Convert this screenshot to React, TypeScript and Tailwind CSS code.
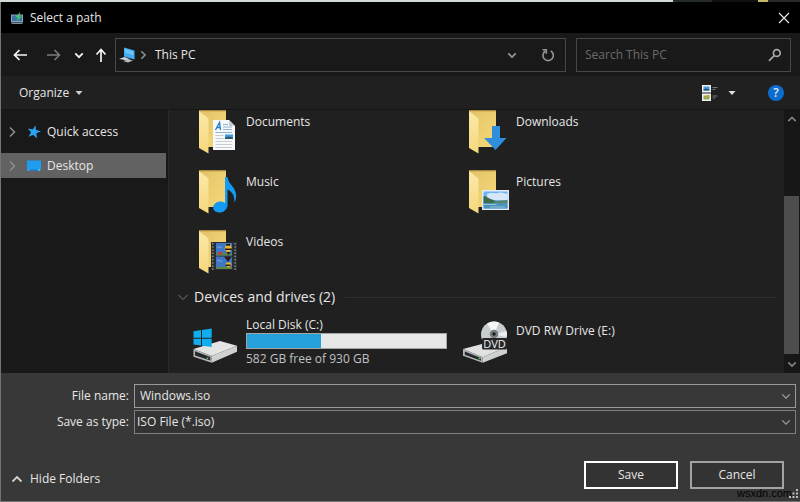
import React, { useState } from 'react';

type FolderKind = 'documents' | 'downloads' | 'music' | 'pictures' | 'videos';

const FOLDERS: { kind: FolderKind; name: string }[] = [
  { kind: 'documents', name: 'Documents' },
  { kind: 'downloads', name: 'Downloads' },
  { kind: 'music', name: 'Music' },
  { kind: 'pictures', name: 'Pictures' },
  { kind: 'videos', name: 'Videos' },
];

const DISK = { name: 'Local Disk (C:)', free: 582, total: 930 };

interface ChevronProps {
  direction: 'up' | 'down' | 'right';
  className?: string;
  strokeWidth?: number;
}

const CHEVRON_PATHS = {
  up: 'M1.5 8.5 6 4l4.5 4.5',
  down: 'M1.5 4 6 8.5 10.5 4',
  right: 'M4 1.5 8.5 6 4 10.5',
};

function Chevron({ direction, className = '', strokeWidth = 1.5 }: ChevronProps) {
  return (
    <svg viewBox="0 0 12 12" fill="none" stroke="currentColor" strokeWidth={strokeWidth} className={`shrink-0 ${className}`}>
      <path d={CHEVRON_PATHS[direction]} />
    </svg>
  );
}

function FolderOverlay({ kind }: { kind: FolderKind }) {
  switch (kind) {
    case 'documents':
      return (
        <g>
          <path d="M21 10h16l6 6v24H21z" fill="#f6f8fa" />
          <path d="M37 10v6h6z" fill="#c3ccd4" />
          <path d="M23.5 20 27.5 12.5 28.5 20M25 17.5h3.5" fill="none" stroke="#2b7fc4" strokeWidth="1.4" />
          <path d="M31 14.5h5M31 17h9M31 19.5h9M23.5 22.5h16.5" stroke="#8fb4d6" strokeWidth="1" />
          <path d="M23.5 25.5h8M23.5 28.5h8M23.5 31.5h16.5M23.5 34.5h16.5M23.5 37.5h16.5" stroke="#c4cbd2" strokeWidth="1" />
          <path d="M33 24.5h8V29h-8z" fill="#3d9be0" />
          <path d="M33 29v-1.5l4-1 4 1.2V29z" fill="#31566b" />
        </g>
      );
    case 'downloads':
      return <path d="M30 16h8v12h6.5L33.5 40 22 28h8z" fill="#2f8fdc" />;
    case 'music':
      return (
        <g fill="#129bf0">
          <ellipse cx="28" cy="37" rx="7" ry="5.5" transform="rotate(-12 28 37)" />
          <path d="M33 7h2.5c.5 7 8.500 10 8.700 18.500 0 3-.7 5-1.700 7 .3-8-3-11-7-13V37H33z" />
        </g>
      );
    case 'pictures':
      return (
        <g>
          <path d="M20 20h27v20H20z" fill="#e3edf5" />
          <path d="M21.5 21.500h24v17h-24z" fill="#6fb3ee" />
          <path d="M25 24c4-2 8 0 11-1s5 0 9.500 1v6h-20z" fill="#d5e8f7" />
          <path d="M21.5 26c3 0 4 2 7 3s6 2 10 4h-17z" fill="#3c6b4c" />
          <path d="M31 32c5-2 9-1 14.500-2v3H31z" fill="#5b8468" />
          <path d="M21.5 33h24v5.500h-24z" fill="#4b93b8" />
          <path d="M21.5 34.500h13M28 37h15" stroke="#a5d0df" strokeWidth=".8" />
        </g>
      );
    case 'videos':
      return (
        <g>
          <path d="M19 12h26v28H19z" fill="#2b2d31" />
          <path d="M20.8 13v27M43.200 13v27" stroke="#84878a" strokeWidth="1.500" strokeDasharray="1.500 1.700" />
          <path d="M24 13h16v12.500H24zM24 26.500h16V39H24z" fill="#3d77c6" />
          <path d="M24 23.500c4-1.500 8 0 16 0v2H24zM24 37.500c5-1.500 9 0 16-1V39H24z" fill="#5d8744" />
          <path d="M34 14h4l2 4.500-3.500 5-4-4z" fill="#e9b731" />
          <path d="M34 14h4v1.800h-4zM33 18.500h7V20h-7zM34.500 22h4l-2 3z" fill="#2a1d1a" />
          <path d="M32 26.500h8L36 32z" fill="#2a1d1a" />
          <path d="M34.500 32.500h4l1 2.500-3 3-3-3z" fill="#e9b731" />
          <path d="M33.500 34.500h5V36h-5z" fill="#2a1d1a" />
          <path d="M26 22h4.500v2.500H26z" fill="#b9433c" />
          <path d="M25 17.500c2-1.500 3 0 5 .500M25 31c2-1.500 3 0 5 .500" stroke="#85afe2" fill="none" />
        </g>
      );
  }
}

function FolderIcon({ kind }: { kind: FolderKind }) {
  return (
    <svg viewBox="0 0 48 46" className="w-12 h-[46px] shrink-0" aria-hidden="true">
      <defs>
        <linearGradient id={`${kind}-back`} x1="0" y1="0" x2="1" y2="1">
          <stop offset="0" stopColor="#e2c268" />
          <stop offset="1" stopColor="#f7d978" />
        </linearGradient>
        <linearGradient id={`${kind}-flap`} x1="0" y1="0" x2="0" y2="1">
          <stop offset="0" stopColor="#fce9a9" />
          <stop offset="1" stopColor="#f5d87c" />
        </linearGradient>
      </defs>
      <path d="M7 .5h27V37H7z" fill={`url(#${kind}-back)`} />
      <path d="M7 .5h27v1H7z" fill="#c9a548" />
      <path d="M7 1 16.500 8.500v35L7 38z" fill={`url(#${kind}-flap)`} />
      <FolderOverlay kind={kind} />
    </svg>
  );
}

function LocalDiskIcon() {
  return (
    <svg viewBox="0 0 48 44" className="w-12 h-11 shrink-0" aria-hidden="true">
      <path d="M1.500 28 28 20l17 4.700L19.700 35z" fill="#e4e4e4" />
      <path d="M1.500 28 19.700 35v6.700L1.500 35.700z" fill="#b5b7b8" />
      <path d="M19.700 35 45 24.700v6L19.700 41.700z" fill="#cfd0d1" />
      <path d="M3 30.200 18.300 36v3.600L3 34.400z" fill="#26292b" />
      <path d="M15.500 36.500v1.500" stroke="#49d35e" strokeWidth="1.500" />
      <path d="M1.500 10.200 9 9v7.700H1.500zM10 8.900 19.700 7.500v9.200H10zM1.500 17.700H9v6.800L1.500 23.500zM10 17.700h9.700v8.300L10 24.700z" fill="#11aeef" />
    </svg>
  );
}

function DvdDriveIcon() {
  return (
    <svg viewBox="0 0 48 44" className="w-12 h-11 shrink-0" aria-hidden="true">
      <path d="M1 28 24.700 21.700 45 25.700 20.700 36.300z" fill="#e1e1e1" />
      <path d="M1 28l19.700 8.300v5.400L1 34.700z" fill="#b5b7b8" />
      <path d="M20.700 36.300 45 25.700v6.600L20.700 41.700z" fill="#cfd0d1" />
      <path d="M2.800 30.500 19 37v2.700L2.800 33.800z" fill="#26292b" />
      <path d="M16.500 37.500h2" stroke="#49d35e" strokeWidth="1.500" />
      <circle cx="32" cy="13.500" r="13" fill="#c8cdcf" />
      <path d="M32 13.500 25 2.600A13 13 0 0 1 37 1.500z" fill="#f4f6f6" />
      <path d="M32 13.500 44.500 10a13 13 0 0 1 .3 6z" fill="#e9eded" />
      <circle cx="32" cy="13" r="4.300" fill="#777d80" />
      <circle cx="32" cy="13" r="1.700" fill="#1b1c1c" />
      <rect x="20" y="17" width="25" height="11.500" rx="1.500" fill="#242628" />
      <text x="32.500" y="26.500" textAnchor="middle" fontSize="11" fill="#f2f2f2">
        DVD
      </text>
    </svg>
  );
}

function TitleBar() {
  return (
    <header className="flex h-[31px] shrink-0 items-center bg-black pl-2.5 pr-1.5">
      <svg viewBox="0 0 14 14" className="h-3.5 w-3.5" aria-hidden="true">
        <path d="M0 3.500h12v8H0z" fill="#8aa3bd" />
        <path d="M1 4.500h10v5.500H1z" fill="#3f72a3" />
        <path d="M.5 12h11v1H.5z" fill="#7d8fa6" />
        <path d="M9.500.5 4.500 6.500h2.700L5.500 10.500l5-5H8z" fill="#3ed65f" />
      </svg>
      <h1 className="ml-[5px] flex-1 text-xs">Select a path</h1>
      <button aria-label="Close" className="flex h-5 w-5 items-center justify-center">
        <svg viewBox="0 0 12 12" className="h-3 w-3" fill="none" stroke="#e8e8e8" strokeWidth="1.200">
          <path d="m1 1 10 10M11 1 1 11" />
        </svg>
      </button>
    </header>
  );
}

function AddressRow() {
  return (
    <div className="flex h-[43px] shrink-0 items-center bg-[#191919] pl-[11px] pr-[9px]">
      <nav className="flex w-[103px] items-center" aria-label="Navigation">
        <button aria-label="Back" className="w-4">
          <svg viewBox="0 0 16 14" className="h-3.5 w-4" fill="none" stroke="#f5f5f5" strokeWidth="1.700">
            <path d="M15 7H2.500M7.500 2l-5 5 5 5" />
          </svg>
        </button>
        <button aria-label="Forward" className="ml-[18px] w-4">
          <svg viewBox="0 0 16 14" className="h-3.5 w-4" fill="none" stroke="#7d7d7d" strokeWidth="1.500">
            <path d="M1 7h12.500M8.500 2l5 5-5 5" />
          </svg>
        </button>
        <button aria-label="Recent locations" className="ml-3 w-2.5">
          <Chevron direction="down" className="h-2.5 w-2.5 text-[#f0f0f0]" strokeWidth={2.2} />
        </button>
        <button aria-label="Up" className="ml-2.5 w-3.5">
          <svg viewBox="0 0 14 16" className="h-4 w-3.5" fill="none" stroke="#f5f5f5" strokeWidth="1.700">
            <path d="M7 15V2.500M2.500 7.500l4.500-5 4.500 5" />
          </svg>
        </button>
      </nav>
      <div className="flex h-[34px] flex-1 items-center border border-[#484848] pl-0.5">
        <svg viewBox="0 0 18 16" className="h-4 w-[18px]" aria-hidden="true">
          <path d="M6 .5 16.500 3.500v9L6 9.500z" fill="#42aef0" />
          <path d="M7 2 15.500 4.400v4L7 5.500z" fill="#6cc4f7" />
          <path d="M1 12 6.500 10l6 2.500-5 .5z" fill="#d9dde0" />
          <path d="M5 14 10 12.500l5 1-5 2z" fill="#b6bdc2" />
        </svg>
        <Chevron direction="right" className="ml-0.5 h-2.5 w-2.5 text-[#8c8c8c]" strokeWidth={2} />
        <button className="ml-[7px] flex-1 text-left text-xs">This PC</button>
        <button aria-label="Previous locations" className="mr-[18px] p-1.5">
          <Chevron direction="down" className="h-2.5 w-2.5 text-[#999999]" strokeWidth={2} />
        </button>
        <button aria-label="Refresh" className="mr-2.5">
          <svg viewBox="0 0 14 14" className="h-3.5 w-3.5" fill="none" stroke="#969696" strokeWidth="1.600">
            <path d="M4.500 3A5.200 5.200 0 1 0 9.800 3" />
            <path d="M1.500 1.800h3.800v4" />
          </svg>
        </button>
      </div>
      <div className="ml-2.5 flex h-[34px] w-[215px] items-center border border-[#484848] pl-2 pr-2">
        <input
          type="search"
          aria-label="Search This PC"
          placeholder="Search This PC"
          className="min-w-0 flex-1 bg-transparent text-xs placeholder:text-[#6b6b6b] focus:outline-none"
        />
        <svg viewBox="0 0 14 14" className="h-3.5 w-3.5" fill="none" stroke="#a8a8a8" strokeWidth="1.700" aria-hidden="true">
          <circle cx="8.800" cy="5" r="3.400" />
          <path d="M6.200 7.600 1 12.800" />
        </svg>
      </div>
    </div>
  );
}

function Toolbar() {
  return (
    <div className="flex h-[34px] shrink-0 items-center border-b border-[#171717] bg-[#202020] pl-[18px] pr-4">
      <button className="flex items-center gap-1.5 text-xs">
        Organize
        <svg viewBox="0 0 8 4" className="h-1 w-2" aria-hidden="true">
          <path d="M.5 0h7L4 4z" fill="#cfcfcf" />
        </svg>
      </button>
      <div className="flex-1" />
      <button aria-label="Change your view" className="flex items-center">
        <svg viewBox="0 0 16 16" className="h-4 w-4" aria-hidden="true">
          <path d="M0 0h9v7.500H0zM0 8.500h9V16H0z" fill="#eef1f3" />
          <path d="M1.500 1.500h6v4h-6z" fill="#4d9ad8" />
          <path d="M1.500 4.500 4 3.500l3.500 1v1h-6z" fill="#29516c" />
          <path d="M1.500 10.500h6v4h-6z" fill="#90ad55" />
          <path d="M4.500 10h3v2h-3z" fill="#d79c31" />
          <path d="M10.500 2.500h5M10.500 4.500h3M10.500 11h5M10.500 13h3" stroke="#777777" />
        </svg>
        <svg viewBox="0 0 8 4" className="ml-2.5 h-1 w-2" aria-hidden="true">
          <path d="M.5 0h7L4 4z" fill="#e0e0e0" />
        </svg>
      </button>
      <button aria-label="Help" className="ml-8 flex h-4 w-4 items-center justify-center rounded-full bg-[#0a6cce] text-xs font-semibold">
        ?
      </button>
    </div>
  );
}

function Sidebar() {
  const [selected, setSelected] = useState('Desktop');

  const items = [
    {
      name: 'Quick access',
      icon: (
        <path
          d="M7 0 8.600 4.700 13.800 4.800 9.700 7.800 11.200 12.800 7 9.900 2.800 12.800 4.300 7.800.2 4.800 5.400 4.700z"
          fill="#29a4f2"
          transform="rotate(12 7 6.500)"
        />
      ),
    },
    {
      name: 'Desktop',
      icon: (
        <g>
          <path d="M0 1.500h14v10H0z" fill="#1e9df1" />
          <path d="M0 10.500h14v1H0z" fill="#1579c2" />
          <path d="M1 10.500h1v1H1zM11 10.500h2v1h-2z" fill="#a5d6f5" />
        </g>
      ),
    },
  ];

  return (
    <aside className="flex w-[168px] shrink-0 flex-col gap-[9px] border-r border-[#2a2a2a] bg-[#191919] pr-0.5 pt-[9px]">
      {items.map((item) => (
        <button
          key={item.name}
          onClick={() => setSelected(item.name)}
          className={`flex h-[25px] items-center pl-[5px] text-xs ${selected === item.name ? 'bg-[#626262]' : ''}`}
        >
          <Chevron direction="right" className="h-3 w-3 text-[#8f8f8f]" />
          <svg viewBox="0 0 14 13" className="ml-[9px] mr-1.5 h-[13px] w-3.5 overflow-visible" aria-hidden="true">
            {item.icon}
          </svg>
          {item.name}
        </button>
      ))}
    </aside>
  );
}

function FileList() {
  const usedPercent = ((DISK.total - DISK.free) / DISK.total) * 100;

  return (
    <main className="min-w-0 flex-1 overflow-hidden bg-[#202020] text-xs">
      <div className="grid grid-cols-[270px_270px] pl-[23px]">
        {FOLDERS.map((folder) => (
          <button key={folder.kind} className="flex h-[60px] items-start gap-1.5 text-left">
            <FolderIcon kind={folder.kind} />
            <span className="pt-1 leading-4">{folder.name}</span>
          </button>
        ))}
      </div>
      <div className="flex h-3.5 items-center pl-2 pr-2">
        <Chevron direction="down" className="h-3 w-3 text-[#555555]" strokeWidth={1.2} />
        <h2 className="ml-[5px] text-sm leading-4">Devices and drives (2)</h2>
        <div className="ml-2.5 h-px flex-1 bg-[#2e2e2e]" />
      </div>
      <div className="mt-[17px] grid grid-cols-[270px_270px] pl-[23px]">
        <button className="flex items-start gap-1.5 text-left">
          <LocalDiskIcon />
          <span className="-mt-1 flex w-[201px] flex-col">
            <span className="leading-4">{DISK.name}</span>
            <span className="block h-4 border border-[#a5a5a5] bg-[#e6e6e6]">
              <span className="block h-full bg-[#26a0da]" style={{ width: `${usedPercent}%` }} />
            </span>
            <span className="pt-0.5 leading-4 text-[#c0c0c0]">
              {DISK.free} GB free of {DISK.total} GB
            </span>
          </span>
        </button>
        <button className="flex items-start gap-1.5 text-left">
          <DvdDriveIcon />
          <span className="pt-0.5 leading-4">DVD RW Drive (E:)</span>
        </button>
      </div>
    </main>
  );
}

function ScrollBar() {
  return (
    <div className="flex w-4 shrink-0 flex-col items-center bg-[#171717]">
      <button aria-label="Scroll up" className="flex h-[18px] items-center">
        <Chevron direction="up" className="h-2.5 w-2.5 text-[#808080]" strokeWidth={2} />
      </button>
      <div className="flex w-full flex-1 flex-col justify-end">
        <div className="h-[70%] w-[15px] bg-[#4d4d4d]" />
      </div>
      <button aria-label="Scroll down" className="flex h-[19px] items-center">
        <Chevron direction="down" className="h-2.5 w-2.5 text-[#808080]" strokeWidth={2} />
      </button>
    </div>
  );
}

function Footer() {
  const [fileName, setFileName] = useState('Windows.iso');

  return (
    <footer className="relative shrink-0 bg-[#383838] pb-3 pt-[11px] text-xs">
      <div className="grid grid-cols-[128px_1fr] items-center gap-x-[5px] gap-y-0.5 pr-1">
        <label htmlFor="file-name" className="text-right">
          File name:
        </label>
        <div className="flex h-6 items-center border border-[#9b9b9b] pl-[5px] pr-1">
          <input
            id="file-name"
            value={fileName}
            onChange={(e) => setFileName(e.target.value)}
            className="min-w-0 flex-1 bg-transparent focus:outline-none"
          />
          <button aria-label="Previous file names">
            <Chevron direction="down" className="h-2.5 w-2.5 text-[#a0a0a0]" />
          </button>
        </div>
        <label htmlFor="file-type" className="text-right">
          Save as type:
        </label>
        <div className="relative flex h-6 items-center border border-[#7f7f7f] bg-[#333333]">
          <select id="file-type" className="h-full w-full appearance-none bg-transparent pl-0.5 focus:outline-none">
            <option>ISO File (*.iso)</option>
          </select>
          <Chevron direction="down" className="pointer-events-none absolute right-1 h-2.5 w-2.5 text-[#a0a0a0]" />
        </div>
      </div>
      <div className="mt-[27px] flex items-center pl-2.5 pr-4">
        <button className="mt-2 flex items-center gap-[7px]">
          <Chevron direction="up" className="h-3 w-3 text-[#d0d0d0]" strokeWidth={1.8} />
          Hide Folders
        </button>
        <div className="flex-1" />
        <button className="h-7 w-[94px] border-2 border-white bg-[#333333]">Save</button>
        <button className="ml-3 h-7 w-[94px] border-2 border-[#a3a3a3] bg-[#333333]">Cancel</button>
      </div>
      <span className="absolute bottom-0 right-2 font-['Liberation_Sans'] text-[11px] leading-4 text-black">wsxdn.com</span>
      <svg viewBox="0 0 10 10" className="absolute bottom-0.5 right-px h-2.5 w-2.5" fill="#bdbdbd" aria-hidden="true">
        <path d="M7 0h2v2H7zM3.500 3.500h2v2h-2zM7 3.500h2v2H7zM0 7h2v2H0zM3.500 7h2v2h-2zM7 7h2v2H7z" />
      </svg>
    </footer>
  );
}

export default function App() {
  return (
    <div className="flex h-screen flex-col bg-[#202020] font-['Open_Sans',sans-serif] text-[#e6e6e6]">
      {/* Sliver of the window behind the dialog */}
      <div className="flex h-0.5 shrink-0">
        <div className="flex-1 bg-[#d3dad8]" />
        <div className="w-[39px] bg-[#242b2c]" />
        <div className="w-[46px] bg-[#111111]" />
        <div className="w-2.5 bg-[#c4b866]" />
        <div className="w-8 bg-[#2a2a2a]" />
      </div>
      <div className="flex min-h-0 flex-1 flex-col border-b border-l border-[#747474]">
        <TitleBar />
        <AddressRow />
        <Toolbar />
        <div className="flex min-h-0 flex-1">
          <Sidebar />
          <FileList />
          <ScrollBar />
        </div>
        <Footer />
      </div>
    </div>
  );
}
